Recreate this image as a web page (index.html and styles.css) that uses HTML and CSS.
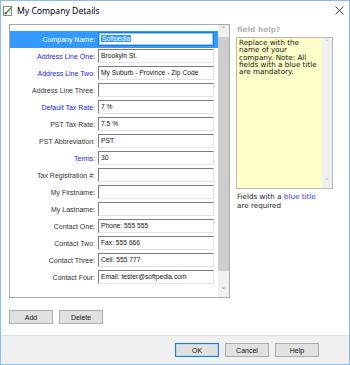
FILE: index.html
```html
<!DOCTYPE html>
<html lang="en">
<head>
    <meta charset="UTF-8">
    <title>My Company Details</title>
    <link rel="stylesheet" href="styles.css">
</head>
<body>
    <div id="window">
        <!-- Title bar -->
        <div class="titlebar">
            <svg class="app-icon" width="10" height="10" viewBox="0 0 10 10">
                <rect x="0.5" y="0.5" width="8" height="9" fill="#fff" stroke="#8a8a8a"/>
                <path d="M2 8 L9 1" stroke="#3fa34d" stroke-width="1.6"/>
                <path d="M2 8 L3.5 6.5" stroke="#1d6b2a" stroke-width="1.6"/>
            </svg>
            <span class="title">My Company Details</span>
            <svg class="close" width="9" height="9" viewBox="0 0 9 9">
                <path d="M0.5 0.5 L8.5 8.5 M8.5 0.5 L0.5 8.5" stroke="#222" stroke-width="0.9"/>
            </svg>
        </div>

        <div class="dialog-body">
            <div class="top-area">
                <!-- Field list -->
                <div class="field-list">
                    <div class="rows">
                        <div class="row selected">
                            <label>Company Name:</label>
                            <div class="field focused"><span class="sel">Softpedia</span></div>
                        </div>
                        <div class="row">
                            <label class="required">Address Line One:</label>
                            <div class="field">Brookyln St.</div>
                        </div>
                        <div class="row">
                            <label class="required">Address Line Two:</label>
                            <div class="field">My Suburb - Province - Zip Code</div>
                        </div>
                        <div class="row">
                            <label>Address Line Three:</label>
                            <div class="field"></div>
                        </div>
                        <div class="row">
                            <label class="required">Default Tax Rate:</label>
                            <div class="field">7 %</div>
                        </div>
                        <div class="row">
                            <label>PST Tax Rate:</label>
                            <div class="field">7.5 %</div>
                        </div>
                        <div class="row">
                            <label>PST Abbreviation:</label>
                            <div class="field">PST</div>
                        </div>
                        <div class="row">
                            <label class="required">Terms:</label>
                            <div class="field">30</div>
                        </div>
                        <div class="row">
                            <label>Tax Registration #:</label>
                            <div class="field"></div>
                        </div>
                        <div class="row">
                            <label>My Firstname:</label>
                            <div class="field"></div>
                        </div>
                        <div class="row">
                            <label>My Lastname:</label>
                            <div class="field"></div>
                        </div>
                        <div class="row">
                            <label>Contact One:</label>
                            <div class="field">Phone: 555 555</div>
                        </div>
                        <div class="row">
                            <label>Contact Two:</label>
                            <div class="field">Fax: 555 666</div>
                        </div>
                        <div class="row">
                            <label>Contact Three:</label>
                            <div class="field">Cell: 555 777</div>
                        </div>
                        <div class="row">
                            <label>Contact Four:</label>
                            <div class="field">Email: tester@softpedia.com</div>
                        </div>
                    </div>
                    <div class="vscroll list-scroll">
                        <div class="arrow">&#708;</div>
                        <div class="thumb"></div>
                        <div class="arrow">&#709;</div>
                    </div>
                </div>

                <!-- Help panel -->
                <div class="help-panel">
                    <div class="help-caption">field help?</div>
                    <div class="help-box">
                        <div class="help-text">Replace with the name of your company. Note: All fields with a blue title are mandatory.</div>
                        <div class="vscroll help-scroll">
                            <div class="arrow">&#708;</div>
                            <div class="arrow">&#709;</div>
                        </div>
                    </div>
                    <p class="help-note">Fields with a <span class="blue">blue title</span> are required</p>
                </div>
            </div>

            <div class="list-actions">
                <button class="btn">Add</button>
                <button class="btn">Delete</button>
            </div>
        </div>

        <div class="footer">
            <button class="btn default">OK</button>
            <button class="btn">Cancel</button>
            <button class="btn">Help</button>
        </div>
    </div>
</body>
</html>
```

FILE: styles.css
```css
body {
    margin: 0;
    padding: 0;
    background-color: #fff;
    font-family: 'Liberation Sans', Arial, sans-serif;
}

#window {
    width: 350px;
    height: 365px;
    box-sizing: border-box;
    border: 1px solid #8fbfe8;
    display: flex;
    flex-direction: column;
    background-color: #fff;
}

.titlebar {
    height: 22px;
    display: flex;
    align-items: center;
    padding-left: 2px;
    flex: 0 0 auto;
}

.app-icon {
    margin-right: 4px;
    margin-top: -2px;
}

.title {
    font-family: 'Noto Sans', sans-serif;
    font-size: 8.6px;
    color: #000;
    margin-top: -3px;
}

.close {
    margin-left: auto;
    margin-right: 5px;
    margin-top: -4px;
}

.dialog-body {
    flex: 1 1 auto;
    padding: 1px 0 0 8px;
}

.top-area {
    display: flex;
    align-items: flex-start;
}

/* Field list box */
.field-list {
    width: 221px;
    height: 274px;
    box-sizing: border-box;
    border: 1px solid #a9a9a9;
    display: flex;
}

.rows {
    flex: 1 1 auto;
    padding-top: 6px;
}

.row {
    height: 17px;
    display: flex;
    align-items: flex-start;
    font-size: 7px;
}

.row.selected {
    background-color: #3399ff;
}

.row label {
    width: 85px;
    text-align: right;
    color: #333;
    line-height: 17px;
    white-space: nowrap;
}

.row label.required {
    color: #2424d4;
}

.row.selected label {
    color: #fff;
}

.field {
    width: 116px;
    height: 14px;
    box-sizing: border-box;
    margin: 1px 0 0 3px;
    padding-left: 2px;
    background-color: #fff;
    border: 1px solid;
    border-color: #7d7d7d #e3e3e3 #e3e3e3 #7d7d7d;
    font-size: 6.7px;
    line-height: 12px;
    color: #111;
    white-space: nowrap;
    overflow: hidden;
}

.field.focused {
    border: 1px solid #1c7cd6;
    box-shadow: inset 0 0 0 1px #9cc9f2;
    line-height: 11px;
}

.sel {
    background-color: #3399ff;
    color: #fff;
    padding: 0 1px;
}

/* Scrollbars */
.vscroll {
    display: flex;
    flex-direction: column;
    background-color: #f0f0f0;
    align-items: stretch;
}

.vscroll .arrow {
    height: 11px;
    text-align: center;
    font-family: 'DejaVu Sans', sans-serif;
    font-size: 7px;
    line-height: 11px;
    color: #606060;
}

.list-scroll {
    width: 11px;
}

.list-scroll .thumb {
    height: 234px;
    margin: 1px 0;
    background-color: #cdcdcd;
}

.list-scroll .arrow:last-child {
    margin-top: auto;
}

/* Help panel */
.help-panel {
    margin-left: 6px;
    width: 100px;
}

.help-caption {
    font-family: 'DejaVu Sans', sans-serif;
    font-weight: bold;
    font-size: 7.4px;
    color: #b4b4b4;
    height: 13px;
    line-height: 12px;
    padding-left: 1px;
}

.help-box {
    width: 97px;
    height: 152px;
    box-sizing: border-box;
    border: 1px solid #b9b9b9;
    background-color: #ffffca;
    display: flex;
}

.help-text {
    flex: 1 1 auto;
    padding: 1px 1px 0 2px;
    font-family: 'DejaVu Sans', sans-serif;
    font-size: 7.2px;
    line-height: 7.3px;
    color: #111;
}

.help-scroll {
    width: 10px;
    flex: 0 0 auto;
    justify-content: space-between;
}

.help-scroll .arrow {
    color: #b5b5b5;
}

.help-note {
    width: 88px;
    margin: 3px 0 0 1px;
    font-family: 'DejaVu Sans', sans-serif;
    font-size: 7.2px;
    line-height: 9px;
    color: #222;
}

.help-note .blue {
    color: #3a3af0;
}

/* Buttons */
.btn {
    width: 44px;
    height: 14px;
    box-sizing: border-box;
    padding: 0;
    margin: 0;
    background-color: #e1e1e1;
    border: 1px solid #adadad;
    font-family: 'Liberation Sans', Arial, sans-serif;
    font-size: 7px;
    color: #111;
}

.btn.default {
    border-color: #1c7cd6;
    box-shadow: inset 0 0 0 1px #b8d8f3;
}

.list-actions {
    display: flex;
    gap: 6px;
    margin-top: 12px;
}

.footer {
    flex: 0 0 auto;
    height: 29px;
    box-sizing: border-box;
    border-top: 1px solid #dfdfdf;
    background-color: #f0f0f0;
    display: flex;
    justify-content: flex-end;
    align-items: flex-start;
    gap: 6px;
    padding: 7px 30px 0 0;
}
```
